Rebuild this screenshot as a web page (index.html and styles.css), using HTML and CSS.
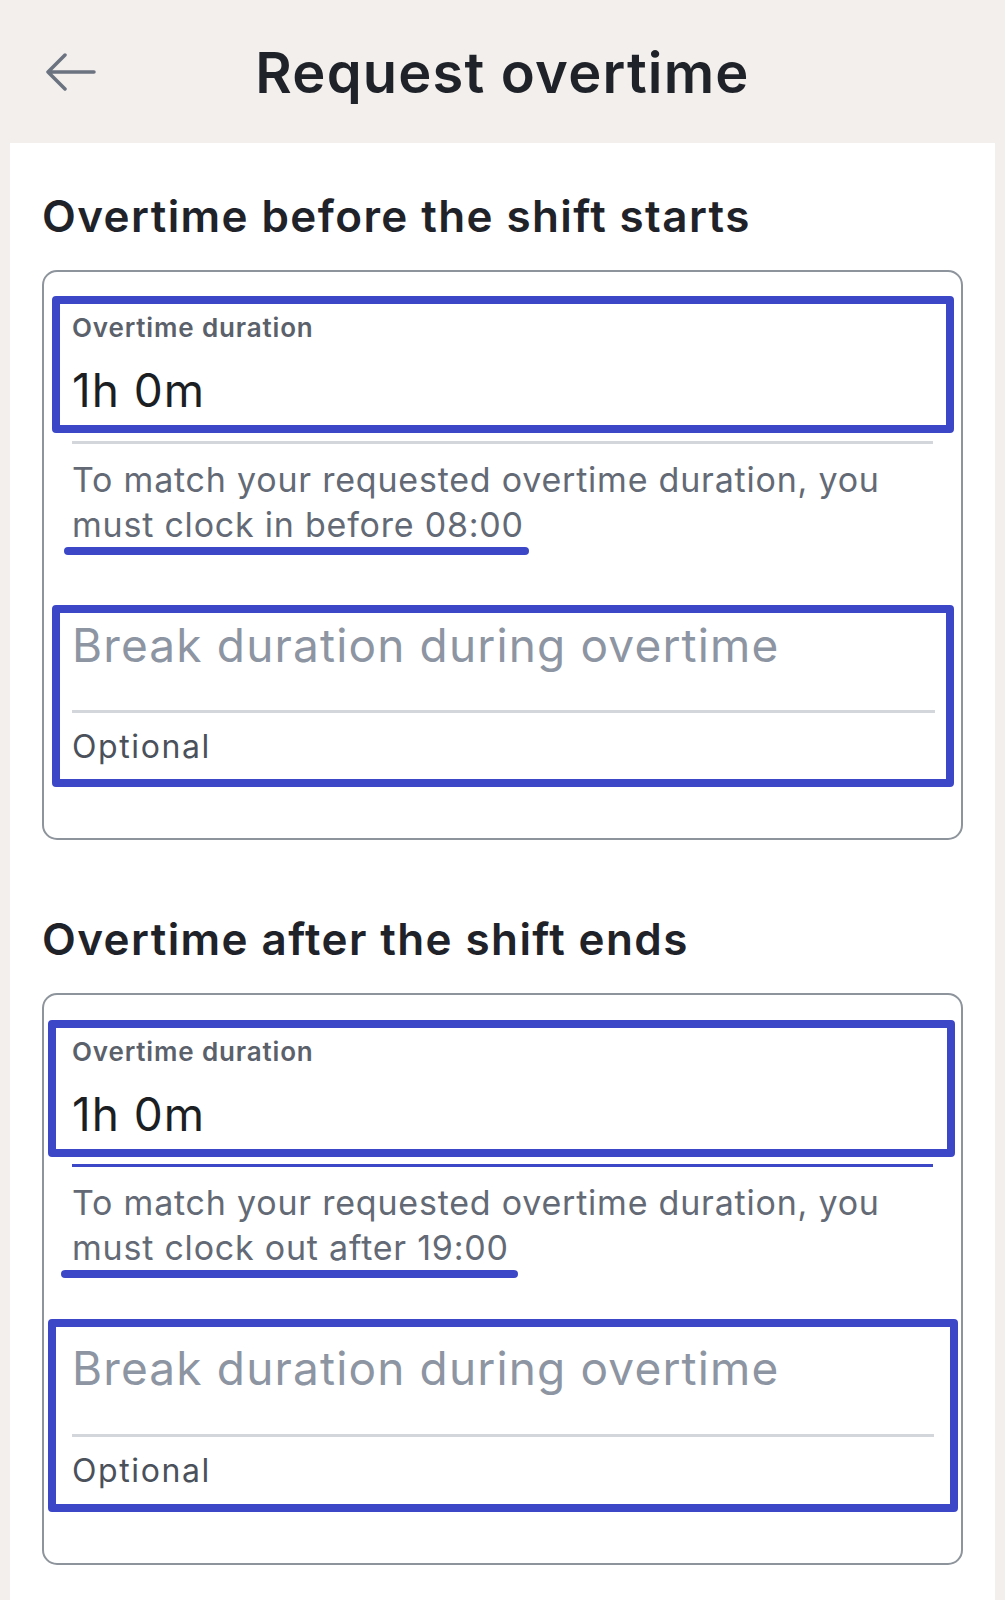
FILE: index.html
```html
<!DOCTYPE html>
<html lang="en">
<head>
<meta charset="utf-8">
<title>Request overtime</title>
<link rel="stylesheet" href="styles.css">
</head>
<body>
<header class="topbar">
  <div class="topbar-side">
    <svg class="back" width="52" height="38" viewBox="0 0 52 38" aria-hidden="true">
      <path d="M3 19 H49 M3 19 L20 2 M3 19 L20 36" fill="none" stroke="#6b7280" stroke-width="3.5" stroke-linecap="round" stroke-linejoin="round"/>
    </svg>
  </div>
  <h1 class="title">Request overtime</h1>
  <div class="topbar-side"></div>
</header>
<main class="panel">
  <h2 class="section-title">Overtime before the shift starts</h2>
  <section class="card">
    <div class="field field-a">
      <div class="field-label">Overtime duration</div>
      <div class="field-value">1h 0m</div>
    </div>
    <div class="rule"></div>
    <p class="helper">To match your requested overtime duration, you must clock in before 08:00</p>
    <div class="mark mark-a"></div>
    <div class="field field-b">
      <div class="placeholder">Break duration during overtime</div>
      <div class="rule rule-inner"></div>
      <div class="optional">Optional</div>
    </div>
  </section>

  <h2 class="section-title section-title-2">Overtime after the shift ends</h2>
  <section class="card card-2">
    <div class="field field-c">
      <div class="field-label">Overtime duration</div>
      <div class="field-value">1h 0m</div>
    </div>
    <div class="rule rule-blue"></div>
    <p class="helper helper-2">To match your requested overtime duration, you must clock out after 19:00</p>
    <div class="mark mark-b"></div>
    <div class="field field-d">
      <div class="placeholder">Break duration during overtime</div>
      <div class="rule rule-inner rule-inner-2"></div>
      <div class="optional">Optional</div>
    </div>
  </section>
</main>
</body>
</html>
```
FILE: styles.css
```css
* { box-sizing: border-box; }
html, body { margin: 0; padding: 0; }
body {
  background: #f2efec;
  font-family: Inter, "Noto Sans", "Liberation Sans", sans-serif;
  width: 1005px;
  min-height: 1600px;
}

.topbar {
  height: 143px;
  display: grid;
  grid-template-columns: 1fr auto 1fr;
  align-items: center;
  padding-top: 3px;
}
.topbar-side { display: flex; align-items: center; }
.back { margin-left: 45px; margin-top: -3px; display: block; }
.title {
  margin: 0;
  font-size: 56px;
  line-height: 66px;
  font-weight: 600;
  color: #1f2329;
  letter-spacing: 1.2px;
}

.panel {
  background: #ffffff;
  margin: 0 10px;
  padding: 45px 32px 37px 32px;
  min-height: 1457px;
}

.section-title {
  margin: 0 0 26px 0;
  font-size: 44px;
  line-height: 56px;
  font-weight: 600;
  color: #1f2329;
  letter-spacing: 1.4px;
}
.section-title-2 { margin-top: 71px; }

.card {
  border: 2px solid #8e949c;
  border-radius: 15px;
  width: 921px;
  padding: 24px 8px 51px 8px;
}
.card-2 { padding-top: 25px; padding-bottom: 51px; }

.field {
  border: 8px solid #3c47c8;
  border-radius: 4px;
  padding: 0 11px 0 12px;
}
.field-a { padding-top: 8px; padding-bottom: 7px; margin-right: -1px; }
.field-c { margin-left: -4px; padding-left: 16px; padding-top: 8px; padding-bottom: 7px; margin-right: -2px; }
.field-b { margin-top: 50px; padding-top: 4px; padding-bottom: 12px; margin-right: -1px; }
.field-d { margin-top: 41px; margin-left: -4px; margin-right: -5px; padding-left: 16px; padding-right: 16px; padding-top: 13px; padding-bottom: 13px; }

.field-label {
  font-size: 26px;
  line-height: 32px;
  font-weight: 600;
  color: #5b616b;
  letter-spacing: 0.85px;
}
.field-value {
  margin-top: 18px;
  font-size: 46px;
  line-height: 56px;
  color: #1b1e22;
  letter-spacing: 1px;
}

.rule {
  height: 3px;
  background: #d3d6db;
  margin: 8px 20px 0 20px;
}
.rule-blue { background: #3c47c8; margin-top: 7px; }
.rule-inner { margin: 37px 0 0 0; }
.rule-inner-2 { margin-top: 38px; }

.helper {
  margin: 13px 0 0 20px;
  font-size: 34px;
  line-height: 45px;
  color: #636a75;
  letter-spacing: 0.78px;
  width: 880px;
}

.mark {
  height: 8px;
  border-radius: 4px;
  background: #3c47c8;
}
.mark-a { margin: 0 0 0 12px; width: 465px; }
.mark-b { margin: 0 0 0 9px; width: 457px; }

.placeholder {
  font-size: 46px;
  line-height: 56px;
  color: #8d95a3;
  letter-spacing: 1.15px;
}
.optional {
  margin-top: 14px;
  font-size: 32px;
  line-height: 40px;
  color: #4b515b;
  letter-spacing: 1.6px;
}
```
